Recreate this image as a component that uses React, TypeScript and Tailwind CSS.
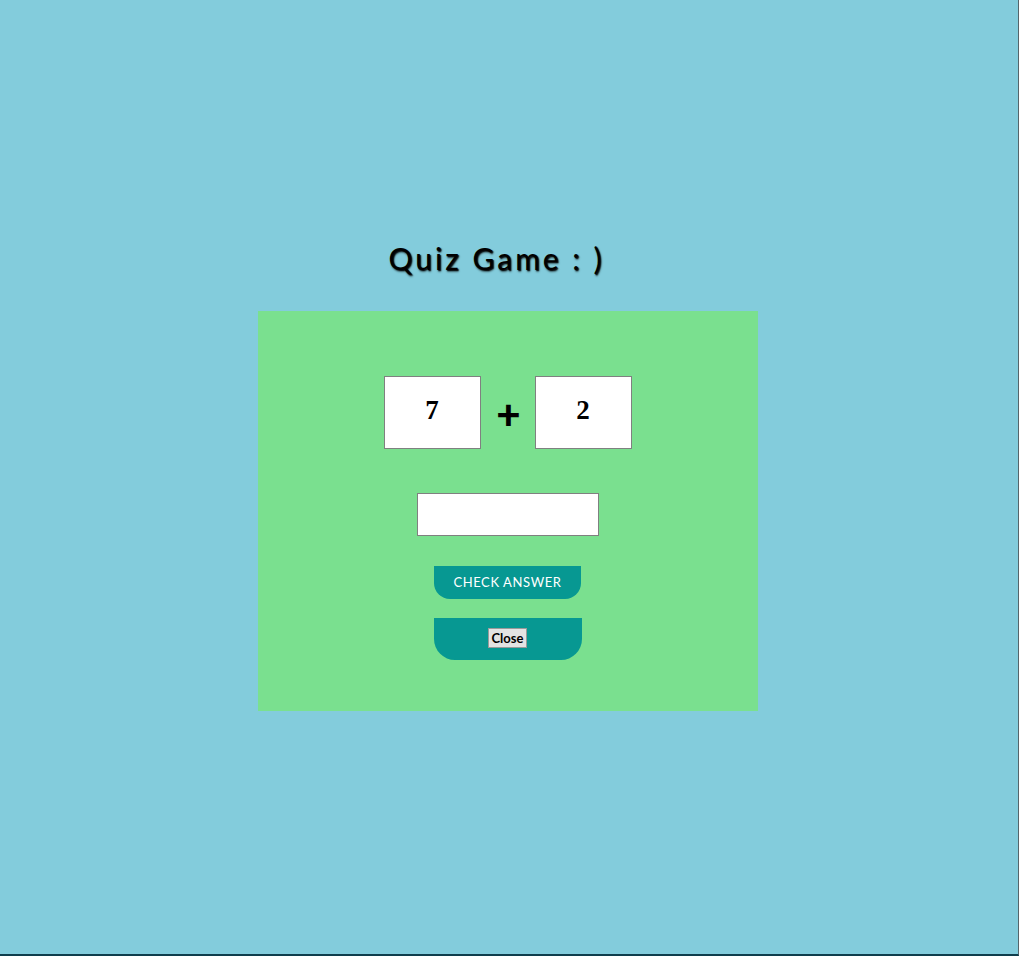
export default function App() {
  return (
    <div className="w-[1019px] h-[956px] bg-[#83ccdc] border-r border-r-[#55656b] border-b-2 border-b-[#0f3d4c] font-['Lato',sans-serif]">
      <div className="flex flex-col items-center pr-[3px] pt-[237px]">
        <h1 className="pr-[22px] text-[30px] leading-[42px] font-normal tracking-[3px] text-black [text-shadow:1px_1px_1px_rgba(0,0,0,0.9),1px_2px_2px_rgba(0,0,0,0.5)]">
          Quiz Game : )
        </h1>
        <div className="mt-[32px] w-[500px] h-[400px] bg-[#7ae08f] flex flex-col items-center pt-[65px]">
          <div className="flex items-center">
            <div className="w-[97px] h-[73px] bg-white border border-[#808080] flex items-center justify-center pb-[5px] font-['Liberation_Serif',serif] font-bold text-[27px] text-black">
              7
            </div>
            <span className="w-[54px] text-center text-[42px] font-black leading-none text-black pt-[1px] pl-[2px]">+</span>
            <div className="w-[97px] h-[73px] bg-white border border-[#808080] flex items-center justify-center pb-[5px] font-['Liberation_Serif',serif] font-bold text-[27px] text-black">
              2
            </div>
          </div>
          <input
            type="text"
            className="mt-[44px] w-[182px] h-[43px] bg-white border border-[#808080] outline-none"
          />
          <button className="mt-[30px] w-[147px] h-[33px] bg-[#079892] rounded-b-[16px] text-white text-[13px] tracking-[0.6px] uppercase">
            Check Answer
          </button>
          <div className="mt-[19px] w-[148px] h-[42px] bg-[#079892] rounded-b-[21px] flex items-center justify-center pb-[2px]">
            <button className="px-[3px] h-[20px] bg-[#e3e3e3] border border-[#9a9a9a] text-[13px] font-bold text-black leading-none">
              Close
            </button>
          </div>
        </div>
      </div>
    </div>
  )
}
